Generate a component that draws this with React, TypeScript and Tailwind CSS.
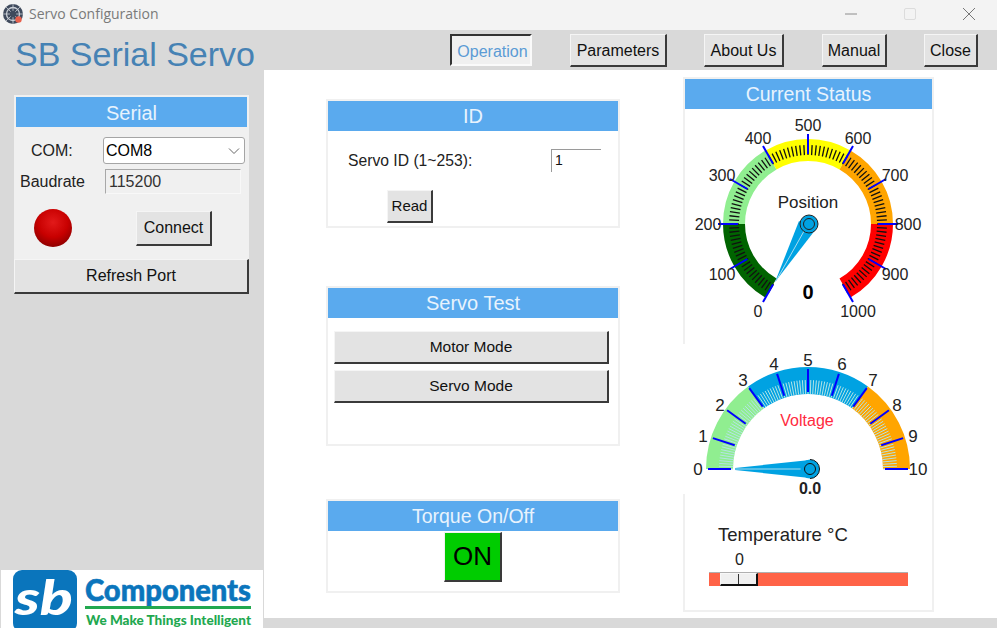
import React from "react";

const NEEDLE = "#00a2e2";

// value -> point on a dial, angle in degrees from straight up
const polar = (cx: number, cy: number, r: number, deg: number) => {
  const a = ((deg - 90) * Math.PI) / 180;
  return { x: cx + r * Math.cos(a), y: cy + r * Math.sin(a) };
};

const arcBand = (cx: number, cy: number, r1: number, r2: number, a1: number, a2: number) => {
  const p1 = polar(cx, cy, r2, a1);
  const p2 = polar(cx, cy, r2, a2);
  const p3 = polar(cx, cy, r1, a2);
  const p4 = polar(cx, cy, r1, a1);
  const large = a2 - a1 > 180 ? 1 : 0;
  return `M${p1.x} ${p1.y}A${r2} ${r2} 0 ${large} 1 ${p2.x} ${p2.y}L${p3.x} ${p3.y}A${r1} ${r1} 0 ${large} 0 ${p4.x} ${p4.y}Z`;
};

const Btn = ({ label, className = "" }: { label: string; className?: string }) => (
  <button className={`bg-[#e3e3e3] border border-[#f5f5f5] border-r-2 border-b-2 border-r-[#3a3a3a] border-b-[#3a3a3a] text-[#111] flex items-center justify-center ${className}`}>
    {label}
  </button>
);

const PanelHeader = ({ title, className = "" }: { title: string; className?: string }) => (
  <div className={`bg-[#5aaaee] text-[#e8f3fd] text-center ${className}`}>{title}</div>
);

const PositionGauge = () => {
  const cx = 123;
  const cy = 115;
  const segs = [
    { from: -150, to: -90, c: "#006400" },
    { from: -90, to: -30, c: "#90ee90" },
    { from: -30, to: 30, c: "#ffff00" },
    { from: 30, to: 90, c: "#ffa500" },
    { from: 90, to: 150, c: "#ff0000" },
  ];
  const labels = [
    { t: "0", x: 73, y: 202 },
    { t: "100", x: 37, y: 165 },
    { t: "200", x: 23, y: 115 },
    { t: "300", x: 37, y: 66 },
    { t: "400", x: 73, y: 29 },
    { t: "500", x: 123, y: 16 },
    { t: "600", x: 173, y: 29 },
    { t: "700", x: 210, y: 66 },
    { t: "800", x: 223, y: 115 },
    { t: "900", x: 210, y: 165 },
    { t: "1000", x: 173, y: 202 },
  ];
  return (
    <svg width="247" height="235" viewBox="0 0 247 235" className="block shrink-0">
      {segs.map((s) => (
        <path key={s.from} d={arcBand(cx, cy, 63, 85, s.from, s.to)} fill={s.c} />
      ))}
      {Array.from({ length: 101 }).map((_, i) => {
        const a = -150 + i * 3;
        const p1 = polar(cx, cy, 69, a);
        const p2 = polar(cx, cy, 79, a);
        return <line key={i} x1={p1.x} y1={p1.y} x2={p2.x} y2={p2.y} stroke="#111" strokeWidth="1.3" />;
      })}
      {Array.from({ length: 11 }).map((_, i) => {
        const a = -150 + i * 30;
        const p1 = polar(cx, cy, 70, a);
        const p2 = polar(cx, cy, 90, a);
        return <line key={i} x1={p1.x} y1={p1.y} x2={p2.x} y2={p2.y} stroke="#0000ff" strokeWidth="2" />;
      })}
      {labels.map((l) => (
        <text key={l.t} x={l.x} y={l.y} textAnchor="middle" dominantBaseline="central" fontSize="16" fill="#222">
          {l.t}
        </text>
      ))}
      <text x={cx} y="93" textAnchor="middle" dominantBaseline="central" fontSize="17" fill="#222">Position</text>
      <text x={cx} y="183" textAnchor="middle" dominantBaseline="central" fontSize="20" fontWeight="bold" fill="#000">0</text>
      <polygon points={`${cx - 9},${cy - 3} ${cx + 8},${cy + 5} 90,173`} fill={NEEDLE} />
      <line x1={cx} y1={cy} x2="91" y2="172" stroke="#a8dcef" strokeWidth="1" />
      <circle cx={cx + 1} cy={cy} r="9" fill={NEEDLE} stroke="#222" strokeWidth="1" />
      <circle cx={cx + 1} cy={cy} r="5.5" fill="none" stroke="#222" strokeWidth="1" />
    </svg>
  );
};

const VoltageGauge = () => {
  const cx = 125;
  const cy = 125;
  const segs = [
    { from: -90, to: -36, c: "#90ee90" },
    { from: -36, to: 36, c: NEEDLE },
    { from: 36, to: 90, c: "#ffa500" },
  ];
  const labels = [
    { t: "0", x: 15, y: 125 },
    { t: "1", x: 20, y: 92 },
    { t: "2", x: 37, y: 61 },
    { t: "3", x: 60, y: 36 },
    { t: "4", x: 91, y: 20 },
    { t: "5", x: 125, y: 16 },
    { t: "6", x: 159, y: 20 },
    { t: "7", x: 190, y: 36 },
    { t: "8", x: 214, y: 61 },
    { t: "9", x: 230, y: 92 },
    { t: "10", x: 235, y: 125 },
  ];
  return (
    <svg width="249" height="150" viewBox="0 0 249 150" className="block bg-white -ml-[2px] shrink-0 overflow-visible">
      {segs.map((s) => (
        <path key={s.from} d={arcBand(cx, cy, 75, 102, s.from, s.to)} fill={s.c} />
      ))}
      {Array.from({ length: 101 }).map((_, i) => {
        const a = -90 + i * 1.8;
        const p1 = polar(cx, cy, 75, a);
        const p2 = polar(cx, cy, 89, a);
        return <line key={i} x1={p1.x} y1={p1.y} x2={p2.x} y2={p2.y} stroke="#b4e4e6" strokeWidth="1" />;
      })}
      {Array.from({ length: 11 }).map((_, i) => {
        const a = -90 + i * 18;
        const p1 = polar(cx, cy, 77, a);
        const p2 = polar(cx, cy, 100, a);
        return <line key={i} x1={p1.x} y1={p1.y} x2={p2.x} y2={p2.y} stroke="#0000ff" strokeWidth="2" />;
      })}
      {labels.map((l) => (
        <text key={l.t} x={l.x} y={l.y} textAnchor="middle" dominantBaseline="central" fontSize="17" fill="#222">
          {l.t}
        </text>
      ))}
      <text x={cx - 1} y="76" textAnchor="middle" dominantBaseline="central" fontSize="16" fill="#ff2a40">Voltage</text>
      <text x={cx + 2} y="144" textAnchor="middle" dominantBaseline="central" fontSize="16" fontWeight="bold" fill="#222">0.0</text>
      <polygon points={`${cx + 2},${cy - 9} ${cx + 2},${cy + 9} 52,${cy + 1} 52,${cy - 1}`} fill={NEEDLE} />
      <line x1={cx} y1={cy} x2="52" y2={cy} stroke="#a8dcef" strokeWidth="1" />
      <circle cx={cx + 2} cy={cy} r="9.5" fill={NEEDLE} />
      <circle cx={cx + 2} cy={cy} r="5.5" fill="none" stroke="#111" strokeWidth="1" />
      <path d={`M${cx + 2} ${cy - 9.5}A9.5 9.5 0 0 1 ${cx + 2} ${cy + 9.5}`} fill="none" stroke="#111" strokeWidth="1" />
    </svg>
  );
};

const Logo = () => (
  <div className="h-[58px] w-[262px] ml-[1px] bg-white shrink-0">
    <svg width="262" height="58" viewBox="0 0 262 58" className="block font-['Lato',sans-serif]">
      <rect x="12" y="0" width="64" height="62" rx="9" fill="#0a75bc" />
      <text x="43" y="45" textAnchor="middle" fontSize="48" fontWeight="900" fontStyle="italic" fill="#fff" textLength="58" lengthAdjust="spacingAndGlyphs">sb</text>
      <text x="84" y="31" fontSize="31" fontWeight="900" fill="#0a75bc" stroke="#0a75bc" strokeWidth="0.6" textLength="166" lengthAdjust="spacingAndGlyphs">Components</text>
      <rect x="84" y="36" width="166" height="3" fill="#22a84f" />
      <text x="85" y="55" fontSize="14" fontWeight="900" fill="#22a84f" textLength="165" lengthAdjust="spacingAndGlyphs">We Make Things Intelligent</text>
    </svg>
  </div>
);

const TitleBar = () => (
  <div className="h-[30px] shrink-0 bg-[#f3f3f3] flex items-center">
    <svg width="22" height="22" viewBox="0 0 22 22" className="ml-[2px] mr-[5px] -mt-[3px]">
      <circle cx="11" cy="11" r="10" fill="#3f4a5c" />
      <circle cx="11" cy="11" r="6.5" fill="none" stroke="#c9ced6" strokeWidth="1.3" />
      <path d="M11 1v20M1 11h20M4 4l14 14M18 4L4 18" stroke="#c9ced6" strokeWidth="0.8" />
      <circle cx="11" cy="11" r="3.2" fill="#3f4a5c" />
      <circle cx="16.5" cy="16.5" r="3.2" fill="#e8604c" />
    </svg>
    <span className="text-[14px] -mt-[3px] text-[#7a7a7a] font-['Open_Sans',sans-serif]">Servo Configuration</span>
    <div className="ml-auto flex items-center h-full">
      <svg width="12" height="12" viewBox="0 0 12 12" className="mr-[47px] -mt-[3px]">
        <path d="M0 6h12" stroke="#8c8c8c" strokeWidth="1" />
      </svg>
      <svg width="12" height="12" viewBox="0 0 12 12" className="mr-[46px] -mt-[3px]">
        <rect x="0.5" y="0.5" width="11" height="11" rx="1.5" fill="none" stroke="#dcdcdc" />
      </svg>
      <svg width="14" height="14" viewBox="0 0 14 14" className="mr-[21px] -mt-[3px]">
        <path d="M1 1l12 12M13 1L1 13" stroke="#777" strokeWidth="1" />
      </svg>
    </div>
  </div>
);

const TopBar = () => (
  <div className="h-[40px] shrink-0 bg-[#d9d9d9] flex items-start text-[16px]">
    <span className="ml-[15px] w-[435px] text-[34px] leading-[48px] text-[#4682b4] whitespace-nowrap">SB Serial Servo</span>
    <div className="mt-[4px] w-[82px] h-[32px] pt-[3px] pl-[3px] bg-[#f0f0f0] border-2 border-t-[#333] border-l-[#333] border-r-[#fafafa] border-b-[#fafafa] flex items-center justify-center text-[#5b9bd5]">Operation</div>
    <Btn label="Parameters" className="ml-[38px] mt-[4px] pt-[1px] w-[97px] h-[33px]" />
    <Btn label="About Us" className="ml-[37px] mt-[4px] pt-[1px] w-[80px] h-[33px]" />
    <Btn label="Manual" className="ml-[38px] mt-[4px] pt-[1px] w-[65px] h-[33px]" />
    <Btn label="Close" className="ml-[37px] mt-[4px] pt-[1px] w-[54px] h-[33px]" />
  </div>
);

const Sidebar = () => (
  <div className="w-[264px] shrink-0 bg-[#d9d9d9] flex flex-col">
    <div className="ml-[14px] mt-[25px] w-[235px] bg-[#f0f0f0] pt-[2px]">
      <PanelHeader title="Serial" className="mx-[2px] h-[30px] leading-[32px] text-[20px]" />
      <div className="flex items-center h-[27px] mt-[10px]">
        <span className="w-[89px] pl-[17px] text-[16px] text-[#222]">COM:</span>
        <div className="w-[142px] h-[27px] bg-white border border-[#a5a5a5] rounded-[3px] flex items-center pl-[2px] text-[16px] text-black">
          COM8
          <svg width="12" height="8" viewBox="0 0 12 8" className="ml-auto mr-[4px]">
            <path d="M1 1.5l5 5 5-5" fill="none" stroke="#666" strokeWidth="1" />
          </svg>
        </div>
      </div>
      <div className="flex items-center h-[25px] mt-[5px]">
        <span className="w-[91px] pl-[6px] text-[16px] text-[#222]">Baudrate</span>
        <div className="w-[136px] h-[25px] border-t border-l border-t-[#a8a8a8] border-l-[#a8a8a8] border-r border-b border-r-[#f8f8f8] border-b-[#f8f8f8] flex items-center pl-[3px] text-[16px] text-[#333]">
          115200
        </div>
      </div>
      <div className="flex items-center mt-[15px] h-[38px]">
        <svg width="40" height="40" viewBox="0 0 40 40" className="ml-[19px]">
          <defs>
            <radialGradient id="led" cx="0.5" cy="0.35" r="0.65">
              <stop offset="0" stopColor="#e21a1a" />
              <stop offset="0.6" stopColor="#c80000" />
              <stop offset="1" stopColor="#8f0000" />
            </radialGradient>
          </defs>
          <circle cx="20" cy="20" r="19" fill="url(#led)" />
        </svg>
        <Btn label="Connect" className="ml-[63px] w-[76px] h-[35px] text-[16px]" />
      </div>
      <Btn label="Refresh Port" className="w-[235px] h-[35px] mt-[12px] text-[16px]" />
    </div>
    <div className="mt-auto">
      <Logo />
    </div>
  </div>
);

const MiddleColumn = () => (
  <div className="w-[294px] ml-[62px] shrink-0 flex flex-col">
    <div className="mt-[29px] h-[129px] border-2 border-[#f0f0f0]">
      <PanelHeader title="ID" className="h-[30px] leading-[30px] text-[20px]" />
      <div className="flex items-center mt-[18px] h-[23px]">
        <span className="ml-[20px] text-[15.7px] text-[#222]">Servo ID (1~253):</span>
        <div className="ml-auto mr-[17px] w-[50px] h-[23px] border-t border-l border-[#9a9a9a] pl-[3px] text-[14px] leading-[20px] text-[#111]">1</div>
      </div>
      <Btn label="Read" className="ml-[59px] mt-[18px] w-[46px] h-[33px] text-[15px]" />
    </div>
    <div className="mt-[58px] h-[160px] border-2 border-[#f0f0f0]">
      <PanelHeader title="Servo Test" className="h-[30px] leading-[30px] text-[20px]" />
      <Btn label="Motor Mode" className="ml-[6px] mt-[13px] w-[275px] h-[33px] text-[15.5px]" />
      <Btn label="Servo Mode" className="ml-[6px] mt-[6px] w-[275px] h-[33px] text-[15.5px]" />
    </div>
    <div className="mt-[53px] h-[94px] border-2 border-[#f0f0f0]">
      <PanelHeader title="Torque On/Off" className="h-[30px] leading-[30px] text-[19.5px]" />
      <div className="flex justify-center">
        <div className="mt-[1px] w-[58px] h-[50px] bg-[#00cc00] border border-[#f0f0f0] border-r-2 border-b-2 border-r-[#3a3a3a] border-b-[#3a3a3a] flex items-center justify-center text-[26px] text-black">ON</div>
      </div>
    </div>
  </div>
);

const StatusColumn = () => (
  <div className="w-[251px] ml-[63px] mt-[7px] h-[535px] shrink-0 border-2 border-[#f0f0f0] flex flex-col">
    <PanelHeader title="Current Status" className="h-[30px] leading-[30px] text-[19.5px]" />
    <PositionGauge />
    <VoltageGauge />
    <div className="pl-[33px] pt-[30px]">
      <div className="text-[18.5px] leading-[22px] text-[#222]">Temperature °C</div>
      <div className="pl-[17px] mt-[4px] text-[16px] leading-[20px] text-[#222]">0</div>
      <div className="-ml-[9px] mt-[2px] w-[199px] h-[14px] bg-[#ff6347] border-t border-[#b0b0b0] pl-[11px]">
        <div className="w-[38px] h-[13px] bg-[#f0f0f0] border border-[#f8f8f8] border-r-2 border-b-2 border-r-[#111] border-b-[#111] flex justify-center">
          <div className="w-[1px] h-full bg-[#333]" />
        </div>
      </div>
    </div>
  </div>
);

export default function App() {
  return (
    <div className="w-[997px] h-[628px] overflow-hidden bg-white flex flex-col font-['Liberation_Sans',Arial,sans-serif]">
      <TitleBar />
      <TopBar />
      <div className="flex-1 flex min-h-0">
        <Sidebar />
        <div className="flex-1 flex flex-col">
          <div className="flex-1 flex min-h-0">
            <MiddleColumn />
            <StatusColumn />
          </div>
          <div className="h-[10px] shrink-0 bg-[#d9d9d9]" />
        </div>
      </div>
    </div>
  );
}
